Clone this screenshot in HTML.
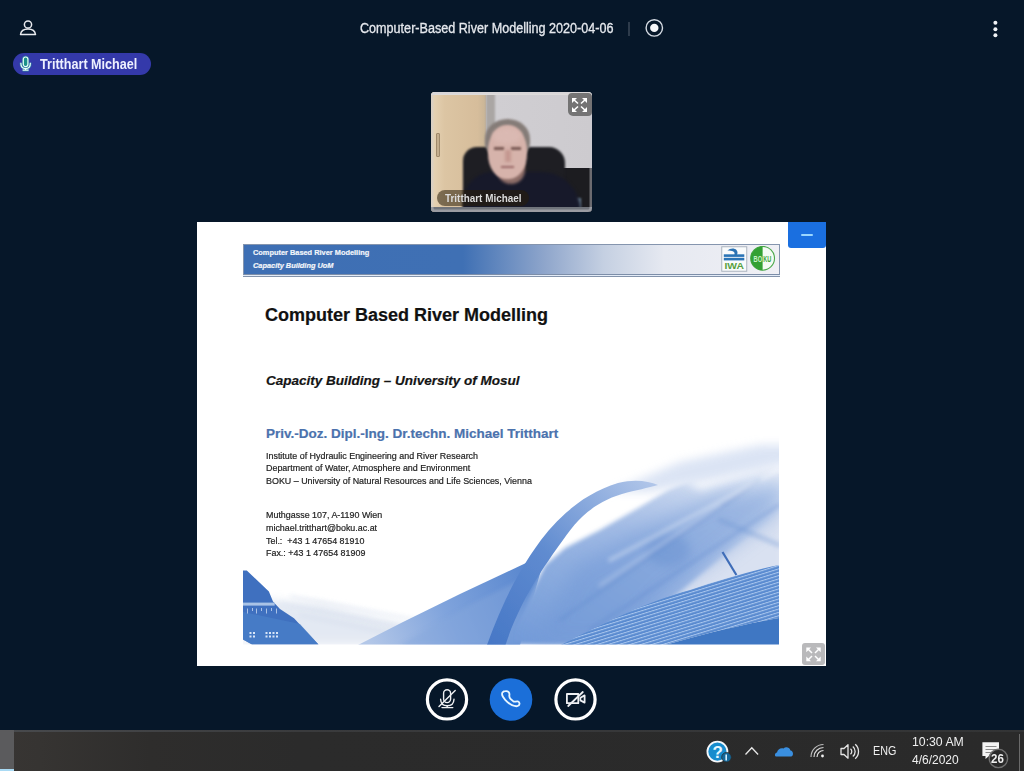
<!DOCTYPE html>
<html><head><meta charset="utf-8">
<style>
*{margin:0;padding:0;box-sizing:border-box}
html,body{width:1024px;height:771px;overflow:hidden;background:#061729;font-family:"Liberation Sans",sans-serif}
.abs{position:absolute}
#title{left:360px;top:18px;color:#e6e9ee;font-size:14px;white-space:nowrap;line-height:20px;transform:scaleX(0.9);transform-origin:0 0;-webkit-text-stroke:0.3px #e6e9ee}
#pill{left:13px;top:53px;width:138px;height:22px;border-radius:11px;background:#3439aa}
#pilltxt{left:40px;top:54.5px;color:#eef0ff;font-size:14px;font-weight:bold;line-height:18px;white-space:nowrap;transform:scaleX(0.9);transform-origin:0 0}
#video{left:431px;top:92px;width:161px;height:120px;border-radius:4px;overflow:hidden;background:#c9c8cc}
#slide{left:197px;top:222px;width:629px;height:444px;background:#fff;overflow:hidden}
#taskbar{left:0;top:730px;width:1024px;height:41px;background:linear-gradient(90deg,#383533 0px,#363432 40px,#2e2d2c 150px,#2b2b2b 300px,#2a2a2a 1024px)}
#slide div{white-space:nowrap;-webkit-text-stroke:0.2px currentColor}
.sm{font-size:9.1px;line-height:12.8px;color:#1e1e1e;transform:scaleX(0.98);transform-origin:0 0}
.tb{color:#f0f0f0;font-size:12px;white-space:nowrap}
</style></head>
<body>
<!-- top bar -->
<svg class="abs" style="left:0;top:0" width="1024" height="90">
  <circle cx="28" cy="24.5" r="3.6" fill="none" stroke="#e8eaee" stroke-width="1.5"/>
  <path d="M20.5 34.5 C21 30.5 24 29 28 29 C32 29 35 30.5 35.5 34.5 Z" fill="none" stroke="#e8eaee" stroke-width="1.5" stroke-linejoin="round"/>
  <line x1="629" y1="22" x2="629" y2="36" stroke="#55606e" stroke-width="1"/>
  <circle cx="654.3" cy="27.9" r="8.2" fill="none" stroke="#d6dce4" stroke-width="1.4"/>
  <circle cx="654.3" cy="27.9" r="4.2" fill="#f6f7fa"/>
  <circle cx="995.4" cy="22.8" r="2" fill="#f0f2f5"/>
  <circle cx="995.4" cy="29.2" r="2" fill="#f0f2f5"/>
  <circle cx="995.4" cy="35.2" r="2" fill="#f0f2f5"/>
</svg>
<div id="title" class="abs">Computer-Based River Modelling 2020-04-06</div>
<div id="pill" class="abs"></div>
<svg class="abs" style="left:18px;top:55px" width="16" height="18">
  <g fill="none" stroke="#2aa9a0" stroke-width="2.6" opacity="0.6">
    <rect x="5.3" y="2" width="4.6" height="9.6" rx="2.3"/>
    <path d="M2.8 7.8 C2.8 11.8 5 13.6 7.6 13.6 C10.2 13.6 12.4 11.8 12.4 7.8"/>
    <path d="M7.6 13.6 L7.6 15 M4.6 15.2 L10.6 15.2"/>
  </g>
  <g fill="none" stroke="#e6fff8" stroke-width="1.2">
    <rect x="5.3" y="2" width="4.6" height="9.6" rx="2.3" fill="#1a9088"/>
    <path d="M2.8 7.8 C2.8 11.8 5 13.6 7.6 13.6 C10.2 13.6 12.4 11.8 12.4 7.8"/>
    <path d="M7.6 13.6 L7.6 15 M4.6 15.2 L10.6 15.2"/>
  </g>
</svg>
<div id="pilltxt" class="abs">Tritthart Michael</div>

<!-- video -->
<div id="video" class="abs">
  <div class="abs" style="left:0;top:0;width:161px;height:120px;background:linear-gradient(90deg,#c4c2c6,#d0ced2 40%,#cdcbcf)"></div>
  <div class="abs" style="left:0;top:0;width:55px;height:120px;background:linear-gradient(90deg,#e6d4b6,#dcc5a3 25%,#d6bd9b 85%,#c8b496)"></div>
  <div class="abs" style="left:55px;top:0;width:9px;height:80px;background:#aaa6a4;filter:blur(1px)"></div>
  <div class="abs" style="left:0;top:0;width:161px;height:3px;background:#e2dfdc"></div>
  <div class="abs" style="left:5px;top:41px;width:4px;height:24px;background:#c4ae8e;border:1px solid #a08a6c;border-radius:1px;filter:blur(0.5px)"></div>
  <!-- right dark desk -->
  <div class="abs" style="left:128px;top:76px;width:33px;height:44px;background:#1c1c20"></div>
  <div class="abs" style="left:138px;top:106px;width:12px;height:14px;background:#6c8294;filter:blur(1px)"></div>
  <!-- chair -->
  <div class="abs" style="left:32px;top:55px;width:102px;height:70px;border-radius:14px 16px 0 0;background:#1e1e23;filter:blur(0.8px)"></div>
  <!-- shirt -->
  <div class="abs" style="left:32px;top:80px;width:118px;height:50px;border-radius:30px 40px 0 0;background:#17192a;filter:blur(1.5px)"></div>
  <!-- neck -->
  <div class="abs" style="left:66px;top:70px;width:28px;height:22px;border-radius:0 0 14px 14px;background:#8e6e68;filter:blur(1.5px)"></div>
  <!-- head -->
  <div class="abs" style="left:54px;top:27px;width:45px;height:40px;border-radius:50% 50% 40% 40%;background:#857c78;filter:blur(1.2px)"></div>
  <div class="abs" style="left:57px;top:33px;width:39px;height:54px;border-radius:48% 48% 46% 46%;background:#d6b3ab;filter:blur(1px)"></div>
  <div class="abs" style="left:62px;top:36px;width:28px;height:16px;border-radius:50%;background:#dab9b2;filter:blur(2px)"></div>
  <div class="abs" style="left:63px;top:55px;width:10px;height:3px;background:#7a5a54;filter:blur(1px)"></div>
  <div class="abs" style="left:80px;top:55px;width:10px;height:3px;background:#7a5a54;filter:blur(1px)"></div>
  <div class="abs" style="left:74px;top:58px;width:6px;height:12px;background:#c49890;filter:blur(1.5px)"></div>
  <div class="abs" style="left:70px;top:74px;width:13px;height:2px;background:#9a6a68;filter:blur(0.8px)"></div>
  <!-- bottom strip -->
  <div class="abs" style="left:0;top:115px;width:161px;height:5px;background:#70747b"></div>
  <div class="abs" style="left:0;top:0;width:161px;height:120px;border-radius:4px;box-shadow:inset 0 0 0 2.5px rgba(205,205,210,0.45)"></div>
  <!-- label -->
  <div class="abs" style="left:6px;top:98px;width:92px;height:16px;border-radius:8px;background:rgba(40,30,10,0.55)"></div>
  <div class="abs" style="left:13.5px;top:99px;font-size:11px;line-height:14px;font-weight:bold;color:#dcdcdc;white-space:nowrap;transform:scaleX(0.9);transform-origin:0 0">Tritthart Michael</div>
  <!-- expand btn -->
  <div class="abs" style="left:136.5px;top:1px;width:24.5px;height:23px;border-radius:4px 4px 4px 5px;background:rgba(100,100,100,0.85)"></div>
  <svg class="abs" style="left:137px;top:1.5px" width="23" height="22">
    <g stroke="#fff" stroke-width="1.6" fill="none">
      <path d="M5 5 L10 9.5 M18 5 L13 9.5 M5 17 L10 12.5 M18 17 L13 12.5"/>
    </g>
    <g fill="#fff">
      <path d="M4 4 L9 4 L4 9 Z M19 4 L14 4 L19 9 Z M4 18 L9 18 L4 13 Z M19 18 L14 18 L19 13 Z"/>
    </g>
  </svg>
</div>

<!-- slide -->
<div id="slide" class="abs">
  <!-- header band -->
  <div class="abs" style="left:46px;top:21.5px;width:537px;height:31px;border:1px solid #8595ae;border-bottom-color:#7d8ea8;background:linear-gradient(90deg,#3e6fb4 0px,#3f70b4 219px,#8ea5cb 300px,#c5d0e2 360px,#e6e9f1 420px,#f0f0f5 537px)"></div>
  <div class="abs" style="left:46px;top:53px;width:537px;height:2px;border-bottom:1px solid #8393ab;background:#e4ecf8"></div>
  <div class="abs sh" style="left:56px;top:26px;font-size:7.4px;font-weight:bold;color:#f2f5fa">Computer Based River Modelling</div>
  <div class="abs sh" style="left:56px;top:39px;font-size:7.4px;font-weight:bold;font-style:italic;color:#f2f5fa">Capacity Building UoM</div>
  <!-- logos -->
  <svg class="abs" style="left:524px;top:24px" width="56" height="27">
    <rect x="0.75" y="0.75" width="25" height="24.5" fill="#f9fbfc" stroke="#aab3be" stroke-width="1"/>
    <path d="M6.5 4.5 C9 2 13.5 1.8 15.5 4 C17 5.8 16.8 8 15.5 9.5 L13 9.5 C14 8 13.8 6.2 12.3 5.4 C10.8 4.6 8.5 4.8 6.5 4.5 Z" fill="#2b72b3"/>
    <rect x="2.8" y="8.3" width="20.5" height="2.6" fill="#2b74b6"/>
    <rect x="2.8" y="11.8" width="20.5" height="2.6" fill="#2b74b6"/>
    <text x="13.2" y="22.8" font-family="Liberation Sans" font-weight="bold" font-size="8.2" fill="#56a03e" text-anchor="middle" textLength="19.5" lengthAdjust="spacingAndGlyphs">IWA</text>
    <circle cx="41.6" cy="12.3" r="11.9" fill="#f4fbf4" stroke="#4aa84a" stroke-width="1.1"/>
    <path d="M41.6 0.4 A11.9 11.9 0 0 0 41.6 24.2 Z" fill="#33a033"/>
    <text x="36.8" y="15.5" font-family="Liberation Sans" font-weight="bold" font-size="8.5" fill="#c8f0c8" text-anchor="middle" textLength="8.5" lengthAdjust="spacingAndGlyphs">BO</text>
    <text x="46.3" y="15.5" font-family="Liberation Sans" font-weight="bold" font-size="8.5" fill="#3aa53a" text-anchor="middle" textLength="8" lengthAdjust="spacingAndGlyphs">KU</text>
  </svg>
  <!-- graphic -->
  <svg class="abs" style="left:0;top:0" width="629" height="443">
   <defs>
    <filter id="b2" x="-20%" y="-20%" width="140%" height="140%"><feGaussianBlur stdDeviation="2"/></filter>
    <filter id="b5" x="-30%" y="-30%" width="160%" height="160%"><feGaussianBlur stdDeviation="5"/></filter>
    <filter id="b10" x="-30%" y="-30%" width="160%" height="160%"><feGaussianBlur stdDeviation="10"/></filter>
    <filter id="b1"><feGaussianBlur stdDeviation="0.7"/></filter>
    <linearGradient id="gwash" x1="0" y1="1" x2="1" y2="0">
      <stop offset="0" stop-color="#7099d8"/><stop offset="0.5" stop-color="#a3bce5"/><stop offset="1" stop-color="#f4f6fb"/>
    </linearGradient>
    <linearGradient id="gtube" x1="0" y1="1" x2="1" y2="0">
      <stop offset="0" stop-color="#4677c6"/><stop offset="0.45" stop-color="#5f8bd0"/><stop offset="1" stop-color="#b4c8ea"/>
    </linearGradient>
    <linearGradient id="gleft" x1="0" y1="0" x2="1" y2="0">
      <stop offset="0" stop-color="#dfe6f2"/><stop offset="1" stop-color="#c9d6ee"/>
    </linearGradient>
    <linearGradient id="gwedge" gradientUnits="userSpaceOnUse" x1="370" y1="645" x2="540" y2="570">
      <stop offset="0" stop-color="#b3c7e8"/><stop offset="0.45" stop-color="#7fa3dc"/><stop offset="1" stop-color="#5584cd"/>
    </linearGradient>
    <clipPath id="cg"><rect x="243" y="420" width="536" height="224.5"/></clipPath>
    <pattern id="stripes" width="6" height="3.2" patternUnits="userSpaceOnUse" patternTransform="rotate(-17)">
      <rect width="6" height="3.2" fill="#5a8bd0"/><rect y="0" width="6" height="1" fill="#a9c6ee"/>
    </pattern>
   </defs>
   <g transform="translate(-197,-222)" clip-path="url(#cg)">
    <!-- left light streaks -->
    <polygon points="243,598 320,604 420,628 470,645 243,645" fill="#dde4f0" filter="url(#b5)" opacity="0.8"/>
    <g stroke="#c9d4e8" stroke-width="2.5" opacity="0.35" filter="url(#b2)"><path d="M280 603 L470 640"/><path d="M300 615 L440 643"/><path d="M290 596 L430 622"/></g>
    <!-- upper right pale area -->
    <polygon points="640,625 700,570 740,500 785,470 785,575 700,600" fill="#d9e1f1" filter="url(#b5)"/>
    <!-- wedge A (left translucent band) -->
    <polygon points="358,645 403,622 460,594 526,563 545,556 520,645" fill="url(#gwedge)"/>
    <polygon points="400,645 470,605 530,575 515,645" fill="#86a7dc" opacity="0.45" filter="url(#b2)"/>
    <!-- wash behind tube -->
    <polygon points="505,645 545,565 565,548 600,530 640,507 668,490 720,468 790,452 790,505 730,550 671,600 600,645" fill="url(#gwash)" filter="url(#b2)"/>
    <polygon points="530,645 575,565 640,530 720,495 790,480 777,512 671,591 620,645" fill="#6f97d6" opacity="0.55" filter="url(#b10)"/>
    <ellipse cx="668" cy="550" rx="22" ry="16" fill="#5d88cc" opacity="0.35" filter="url(#b5)"/>
    <polygon points="668,470 730,430 800,430 800,462 760,470 700,490" fill="#fff" filter="url(#b5)" opacity="0.9"/>
    <polygon points="610,492 680,462 760,445 790,445 790,462 720,478 650,492" fill="#d3def2" filter="url(#b5)" opacity="0.8"/>
    <g stroke-linecap="round" filter="url(#b2)">
      <path d="M560 620 L760 480" stroke="#5a86cc" stroke-width="3" opacity="0.35"/>
      <path d="M590 630 L779 505" stroke="#5a86cc" stroke-width="4" opacity="0.3"/>
      <path d="M600 585 L720 505" stroke="#c8d7f0" stroke-width="3" opacity="0.45"/>
      <path d="M610 560 L779 470" stroke="#ffffff" stroke-width="4" opacity="0.35"/>
      <path d="M720 520 L779 545" stroke="#6a93d2" stroke-width="5" opacity="0.35"/>
    </g>
    <!-- tube -->
    <path d="M487 645 C500 610 515 575 541 540 C560 515 585 493 618 483 C635 479 648 481 658 485 C648 488 636 490 622 494 C595 502 578 518 563 540 C545 565 520 600 505.5 645 Z" fill="url(#gtube)" filter="url(#b1)"/>
    <!-- stick -->
    <line x1="722.5" y1="552" x2="736.4" y2="575" stroke="#3f6db8" stroke-width="2.2"/>
    <!-- striped band -->
    <path d="M561 645 C600 625 650 600 690 590 C720 580 750 571 779 565 L779 618 C740 625 700 635 665 645 Z" fill="url(#stripes)"/>
    <!-- solid bottom right -->
    <path d="M665 645 C700 635 740 625 779 618 L779 645 Z" fill="#3f77c3"/>
    <!-- bottom-left polygon -->
    <polygon points="242.7,570.5 246.8,570.5 268.9,591.5 273,601.4 280,609 294,618.3 318.5,644.6 252,644.6 242.7,639.3" fill="#3f70bf"/>
    <polygon points="242.7,612 300,624 318.5,644.6 252,644.6 242.7,639.3" fill="#4a80c9" opacity="0.7"/>
    <rect x="242.7" y="602.6" width="32" height="3" fill="#a9c3e6"/>
    <g fill="#d8e6f8">
      <rect x="247" y="608.5" width="1" height="5" opacity="0.7"/><rect x="252" y="608" width="1" height="3" opacity="0.7"/><rect x="256" y="608.5" width="1" height="5" opacity="0.7"/><rect x="261" y="608" width="1" height="3" opacity="0.7"/><rect x="266" y="608.5" width="1" height="5" opacity="0.7"/><rect x="271" y="608" width="1" height="3" opacity="0.7"/><rect x="276" y="608.5" width="1" height="5" opacity="0.7"/>
      <rect x="249.5" y="632" width="2" height="2"/><rect x="253" y="632" width="2" height="2"/><rect x="249.5" y="635.5" width="2" height="2"/><rect x="253" y="635.5" width="2" height="2"/>
      <rect x="265.5" y="632" width="2" height="2"/><rect x="269" y="632" width="2" height="2"/><rect x="272.5" y="632" width="2" height="2"/><rect x="276" y="632" width="2" height="2"/>
      <rect x="265.5" y="635.5" width="2" height="2"/><rect x="269" y="635.5" width="2" height="2"/><rect x="272.5" y="635.5" width="2" height="2"/><rect x="276" y="635.5" width="2" height="2"/>
    </g>
   </g>
  </svg>
  <!-- texts -->
  <div class="abs" id="t1" style="left:68px;top:83px;font-size:18px;font-weight:bold;color:#111">Computer Based River Modelling</div>
  <div class="abs" id="t2" style="left:69px;top:150.5px;font-size:13.5px;font-weight:bold;font-style:italic;color:#141414">Capacity Building &#8211; University of Mosul</div>
  <div class="abs" id="t3" style="left:69px;top:203.7px;font-size:13.5px;font-weight:bold;color:#4b72ad">Priv.-Doz. Dipl.-Ing. Dr.techn. Michael Tritthart</div>
  <div class="abs sm" style="left:69px;top:227.7px">Institute of Hydraulic Engineering and River Research<br>Department of Water, Atmosphere and Environment<br>BOKU &#8211; University of Natural Resources and Life Sciences, Vienna</div>
  <div class="abs sm" style="left:69px;top:287px">Muthgasse 107, A-1190 Wien<br>michael.tritthart@boku.ac.at<br>Tel.:&nbsp; +43 1 47654 81910<br>Fax.: +43 1 47654 81909</div>
</div>

<!-- slide buttons -->
<div class="abs" style="left:788px;top:222px;width:38px;height:25.5px;background:#1a6fe0;border-radius:0 0 3px 3px"></div>
<div class="abs" style="left:801px;top:233.5px;width:12px;height:2.5px;background:#9ad6ff;border-radius:1px"></div>
<div class="abs" style="left:801.5px;top:642.5px;width:23px;height:22.5px;background:#b9b9bb;border-radius:3px"></div>
<svg class="abs" style="left:801.5px;top:642.5px" width="23" height="23">
  <g stroke="#fff" stroke-width="1.5" fill="none"><path d="M6 6 L10 10 M17 6 L13 10 M6 17 L10 13 M17 17 L13 13"/></g>
  <g fill="#fff"><path d="M4.3 4.5 L9 4.5 L4.3 9.2 Z M18.7 4.5 L14 4.5 L18.7 9.2 Z M4.3 18.3 L9 18.3 L4.3 13.6 Z M18.7 18.3 L14 18.3 L18.7 13.6 Z"/></g>
</svg>
<!-- action buttons -->
<svg class="abs" style="left:0;top:0" width="1024" height="730">
  <circle cx="447" cy="699.4" r="19.6" fill="#061729" stroke="#fff" stroke-width="3.2"/>
  <g fill="none" stroke="#eef0f3" stroke-width="1.4" stroke-linecap="round">
    <rect x="443.6" y="689.8" width="7" height="12.8" rx="3.5"/>
    <path d="M440.6 699.2 C440.8 703.5 443.5 705.8 447.2 705.8 C450.9 705.8 453.8 703.5 454 699.2"/>
    <path d="M447.2 705.8 L447.2 707.6 M442 707.6 L452.8 707.6"/>
    <path d="M439 706.4 L455.2 690.5"/>
  </g>
  <circle cx="511" cy="699.5" r="21.3" fill="#1b6fd9"/>
  <path d="M505.5 691.2 C508.3 690.8 509.8 692.6 509.4 695 C509.1 696.6 509.2 697.6 510.6 699 L513.4 701.4 C514.8 702.4 515.9 700.9 517.8 701.4 C520.3 702.2 520.1 705.8 517.2 706.2 C513.2 706.6 509 704 505.2 699.8 C502 696.2 501.6 693.6 502.6 692.3 C503.3 691.5 504.4 691.2 505.5 691.2 Z" fill="none" stroke="#e8f6ff" stroke-width="1.8" stroke-linejoin="round"/>
  <circle cx="575.5" cy="699.4" r="19.6" fill="#061729" stroke="#fff" stroke-width="3.2"/>
  <g fill="none" stroke="#eef0f3" stroke-width="1.8" stroke-linecap="round" stroke-linejoin="round">
    <rect x="566.9" y="694" width="11.4" height="9.2"/>
    <path d="M580.4 697.8 L584.6 695.4 L584.6 702.6 L580.4 700.4 Z"/>
    <path d="M568.2 706 L582.8 692"/>
  </g>
</svg>

<!-- taskbar -->
<div id="taskbar" class="abs">
  <div class="abs" style="left:0;top:0;width:1024px;height:2px;background:linear-gradient(90deg,#484a4d,#3a3b3d 300px,#333435)"></div>
  <div class="abs" style="left:0;top:0;width:14px;height:41px;background:#5b5b5d"></div>
  <div class="abs" style="left:0;top:38.5px;width:14px;height:2.5px;background:#a9daf4"></div>
  <div class="abs" style="left:1019px;top:4px;width:1px;height:37px;background:#6a6a6a"></div>
  <svg class="abs" style="left:0;top:0" width="1024" height="41">
    <!-- help icon -->
    <circle cx="717.4" cy="21.6" r="10" fill="#178ccd" stroke="#f5f7fa" stroke-width="1.8"/>
    <text x="717.6" y="28.3" font-family="Liberation Sans" font-weight="bold" font-size="17" fill="#e6f8ff" text-anchor="middle">?</text>
    <circle cx="726.5" cy="27.3" r="4.8" fill="#14689a" stroke="#2a2a2a" stroke-width="0.8"/>
    <rect x="725.4" y="24.5" width="1.6" height="6" fill="#d8f0ff"/>
    <!-- chevron -->
    <path d="M745.5 24.5 L751.8 17.8 L758.1 24.5" fill="none" stroke="#e8e8e8" stroke-width="1.3"/>
    <!-- cloud -->
    <path d="M776 26.5 C774.5 26.5 774.5 22.8 777 22.5 C777.5 19.5 780.5 17.5 783.5 18.5 C785.5 16.5 789.5 17 790.5 20.5 C793.5 20.5 794 26.5 791 26.5 Z" fill="#3a8fe0"/>
    <!-- wifi -->
    <g fill="none" stroke="#bdbdbd" stroke-width="1.2">
      <path d="M811 27 A12.5 12.5 0 0 1 823.5 14.5"/>
      <path d="M814 27 A9.5 9.5 0 0 1 823.5 17.5" stroke="#d6d6d6"/>
      <path d="M817 27 A6.5 6.5 0 0 1 823.5 20.5" stroke="#e0e0e0"/>
    </g>
    <circle cx="822.5" cy="26" r="1.4" fill="#f0f0f0"/>
    <!-- speaker -->
    <g fill="none" stroke="#e6e6e6" stroke-width="1.3" stroke-linejoin="round">
      <path d="M841 18.5 L844 18.5 L848 14.8 L848 28.2 L844 24.5 L841 24.5 Z"/>
      <path d="M850.5 18.8 A3.5 3.5 0 0 1 850.5 24.2"/>
      <path d="M852.8 16.5 A6.5 6.5 0 0 1 852.8 26.5"/>
      <path d="M855.2 14.3 A9.5 9.5 0 0 1 855.2 28.7"/>
    </g>
    <!-- notification -->
    <path d="M982.4 12.3 L999 12.3 L999 26 L989 26 L985.5 29 L985.5 26 L982.4 26 Z" fill="#f4f4f4"/>
    <g stroke="#8a8a8a" stroke-width="1"><path d="M985.5 16.5 L996.5 16.5 M985.5 19.5 L996.5 19.5 M985.5 22.5 L993 22.5"/></g>
    <circle cx="998.4" cy="28.4" r="9.2" fill="#2a2a2a" stroke="#6f6f6f" stroke-width="1.4"/>
  </svg>
  <div class="abs tb" style="left:872.5px;top:13px;font-size:12.5px;line-height:16px;transform:scaleX(0.86);transform-origin:0 0">ENG</div>
  <div class="abs tb" style="left:912px;top:4px;font-size:12.5px;line-height:16px;transform:scaleX(0.98);transform-origin:0 0">10:30 AM</div>
  <div class="abs tb" style="left:912px;top:22px;font-size:12.5px;line-height:16px;transform:scaleX(0.96);transform-origin:0 0">4/6/2020</div>
  <div class="abs tb" style="left:991px;top:20.5px;font-size:12.5px;line-height:16px;font-weight:bold;transform:scaleX(0.92);transform-origin:0 0">26</div>
</div>
</body></html>
